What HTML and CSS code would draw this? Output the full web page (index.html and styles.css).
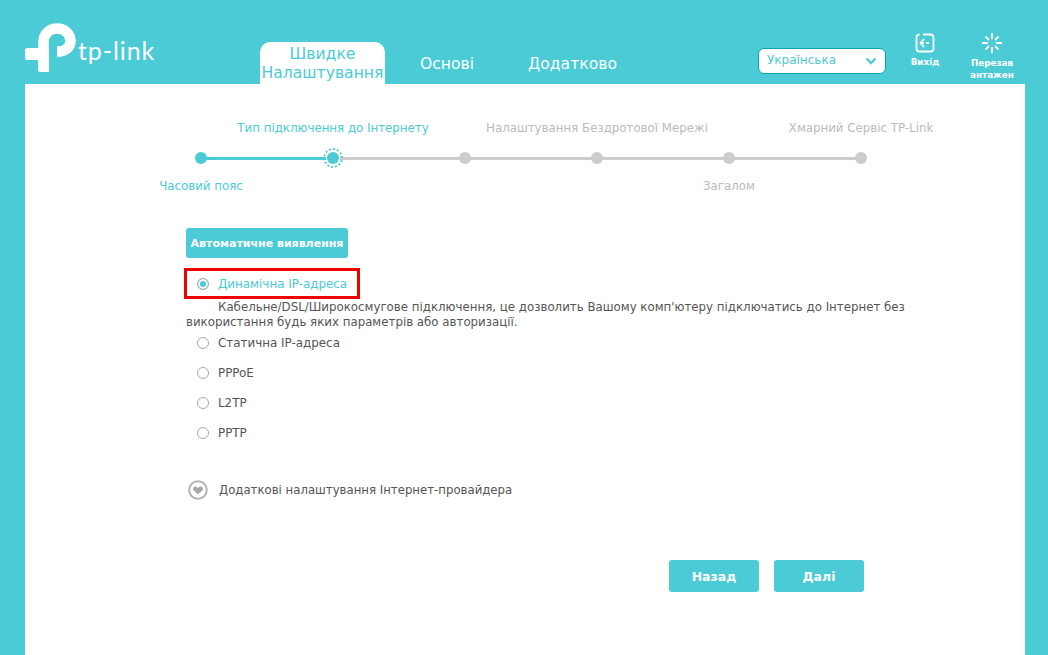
FILE: index.html
```html
<!DOCTYPE html>
<html lang="uk">
<head>
<meta charset="utf-8">
<title>TP-Link</title>
<link rel="stylesheet" href="styles.css">
</head>
<body>
<header class="top">
  <div class="logo">
    <svg class="logo-mark" width="51" height="50" viewBox="0 0 51 50"><path fill="none" stroke="#fff" stroke-width="10.500" d="M18.500 45V19C18.500 11 24.500 5.500 32 5.500C39.500 5.500 45.500 11 45.500 18C45.500 25 39.500 28.500 32 28.500"/><path fill="#fff" d="M2 25H24V37H24V37H2C1 37 0 36 0 35V27C0 26 1 25 2 25ZM13 35H24V49H15C14 49 13 48 13 47Z"/></svg>
    <span class="logo-text">tp-link</span>
  </div>
  <nav class="tabs">
    <a class="tab tab-active">Швидке<br>Налаштування</a>
    <a class="tab tab-basic">Основі</a>
    <a class="tab tab-adv">Додатково</a>
  </nav>
  <div class="tools">
    <div class="lang">
      <span>Українська</span>
      <svg width="12" height="8" viewBox="0 0 12 8"><path d="M1.500 1.500L6 6L10.500 1.500" fill="none" stroke="#4acbd6" stroke-width="2.400"/></svg>
    </div>
    <div class="tool tool-exit">
      <svg width="20" height="20" viewBox="0 0 20 20"><path d="M8 1.500H15.500C17.500 1.500 18.500 2.500 18.500 4.500V15.500C18.500 17.500 17.500 18.500 15.500 18.500H4.500C2.500 18.500 1.500 17.500 1.500 15.500V4.500C1.500 2.500 2.500 1.500 4.500 1.500" fill="none" stroke="#fff" stroke-width="1.800"/><path d="M9 6L5.500 10L9 14M6 10H9M11 10H14" fill="none" stroke="#fff" stroke-width="1.800"/></svg>
      <span>Вихід</span>
    </div>
    <div class="tool tool-reboot">
      <svg width="20" height="20" viewBox="0 0 20 20"><path d="M10 0V6M10 14V20M0 10H6M14 10H20M3.500 3.500L7 7M13 13L16.500 16.500M16.500 3.500L13 7M7 13L3.500 16.500" fill="none" stroke="#fff" stroke-width="1.800"/></svg>
      <span>Перезав<br>антажен</span>
    </div>
  </div>
</header>
<main class="panel">
  <div class="stepper">
    <div class="step done"><span class="up"></span><i class="dot"></i><span class="down">Часовий пояс</span></div>
    <div class="step current"><span class="up">Тип підключення до Інтернету</span><i class="dot"></i><span class="down"></span></div>
    <div class="step"><span class="up"></span><i class="dot"></i><span class="down"></span></div>
    <div class="step"><span class="up">Налаштування Бездротової Мережі</span><i class="dot"></i><span class="down"></span></div>
    <div class="step"><span class="up"></span><i class="dot"></i><span class="down">Загалом</span></div>
    <div class="step last"><span class="up">Хмарний Сервіс TP-Link</span><i class="dot"></i><span class="down"></span></div>
  </div>
  <div class="form">
    <button class="detect">Автоматичне виявлення</button>
    <div class="option selected"><i class="radio"></i><span>Динамічна IP-адреса</span></div>
    <p class="hint">Кабельне/DSL/Широкосмугове підключення, це дозволить Вашому комп'ютеру підключатись до Інтернет без використання будь яких параметрів або авторизації.</p>
    <div class="option plain first"><i class="radio"></i><span>Статична IP-адреса</span></div>
    <div class="option plain"><i class="radio"></i><span>PPPoE</span></div>
    <div class="option plain"><i class="radio"></i><span>L2TP</span></div>
    <div class="option plain"><i class="radio"></i><span>PPTP</span></div>
    <div class="advanced">
      <svg width="20" height="20" viewBox="0 0 20 20"><circle cx="10" cy="10" r="8.800" fill="#fff" stroke="#b4b4b4" stroke-width="2"/><path d="M10 14.500L5.500 10.200C4 8.200 6.500 5.500 8.500 6.800L10 8L11.500 6.800C13.500 5.500 16 8.200 14.500 10.200Z" fill="#a8a8a8"/></svg>
      <span>Додаткові налаштування Інтернет-провайдера</span>
    </div>
    <div class="actions">
      <button class="action">Назад</button>
      <button class="action">Далі</button>
    </div>
  </div>
</main>
</body>
</html>
```
FILE: styles.css
```css
*, *::before, *::after { box-sizing: border-box; }
html, body { margin: 0; height: 655px; overflow: hidden; }
body {
  background: #4acbd6;
  font-family: "DejaVu Sans", Verdana, sans-serif;
  font-size: 11.800px;
  color: #555;
}
.top { height: 84px; display: flex; position: relative; }
.logo { width: 260px; padding: 23px 0 0 25px; display: flex; align-items: flex-start; }
.logo-mark { flex: none; }
.logo-text {
  font-family: "Lato", sans-serif;
  font-weight: 400;
  font-size: 25px;
  line-height: 24px;
  color: #fff;
  margin: 15px 0 0 2px;
  letter-spacing: 0.9px;
}
.tabs { width: 498px; display: flex; align-items: flex-end; }
.tab { font-size: 15.600px; line-height: 19px; text-align: center; color: #fff; }
.tab-active {
  width: 125px; height: 42px;
  background: #fff; color: #4acbd6;
  border-radius: 10px 10px 0 0;
  padding-top: 3px;
  white-space: nowrap;
}
.tab-basic { margin: 0 0 10px 35px; }
.tab-adv { margin: 0 0 10px 54px; }
.tools { flex: 1; display: flex; align-items: flex-start; }
.lang {
  width: 128px; height: 26px; margin-top: 48px;
  background: #fff;
  border: 1px solid #0aa5ae;
  border-radius: 6px;
  display: flex; align-items: center; justify-content: space-between;
  padding: 0 8px;
  color: #4acbd6;
  font-size: 12px;
}
.lang span { margin-top: -2px; }
.tool {
  display: flex; flex-direction: column; align-items: center;
  color: #fff; font-size: 8.800px; font-weight: 700; line-height: 12px; text-align: center;
}
.tool-exit { width: 50px; margin: 33px 0 0 14px; }
.tool-exit span { margin-top: 3px; }
.tool-reboot { width: 60px; margin: 33px 0 0 12px; }
.tool-reboot span { margin-top: 4px; }

.panel { margin: 0 23px 0 25px; height: 571px; background: #fff; padding-top: 37px; }

.stepper { display: grid; grid-template-columns: repeat(6, 132px); margin-left: 110px; }
.step { display: flex; flex-direction: column; align-items: center; position: relative; color: #bbb; }
.step::after {
  content: ""; position: absolute; left: 66px; top: 36px;
  width: 132px; height: 3px; background: #ccc;
}
.step.last::after { display: none; }
.step.done::after { background: #4acbd6; }
.step.done, .step.current { color: #4acbd6; }
.up, .down { height: 15px; line-height: 15px; white-space: nowrap; }
.down { margin-top: 15px; }
.dot {
  width: 12px; height: 12px; margin-top: 16px; border-radius: 50%;
  background: #ccc; position: relative; z-index: 1;
}
.done .dot { background: #4acbd6; }
.current .dot { background: #4acbd6; box-shadow: 0 0 0 1px #fff; }
.current .dot::after {
  content: ""; position: absolute; left: -4px; top: -4px;
  width: 20px; height: 20px; border-radius: 50%;
  border: 2px dotted #4acbd6;
  background: transparent;
}

.form { width: 740px; margin: 34px 0 0 161px; }
.detect {
  display: block; height: 30px; width: 162px; padding: 0;
  border: 0; border-radius: 3px;
  background: #4acbd6; color: #fff;
  font: 700 11px "DejaVu Sans", Verdana, sans-serif;
}
.option { display: flex; align-items: center; gap: 9px; height: 30px; padding-left: 11px; position: relative; color: #555; font-size: 11.900px; }
.radio { width: 12px; height: 12px; border-radius: 50%; border: 1px solid #aaa; background: #fff; flex: none; }
.selected { margin-top: 10px; height: 31px; color: #4acbd6; }
.selected::after {
  content: ""; position: absolute; left: -2px; top: 0;
  width: 176px; height: 31px; border: 3px solid #e00;
}
.selected .radio { background: #4acbd6; box-shadow: inset 0 0 0 2px #fff; }
.hint { margin: 1px 0 0; line-height: 15px; text-indent: 32px; color: #555; }
.first { margin-top: -2px; }
.advanced { display: flex; align-items: center; gap: 11px; margin: 32px 0 0 2px; color: #555; font-size: 11.720px; }
.actions { display: flex; gap: 15px; margin: 60px 0 0 483px; }
.action {
  width: 90px; height: 32px; padding: 0;
  border: 0; border-radius: 3px;
  background: #4acbd6; color: #fff;
  font: 700 12.500px "DejaVu Sans", Verdana, sans-serif;
}
```
